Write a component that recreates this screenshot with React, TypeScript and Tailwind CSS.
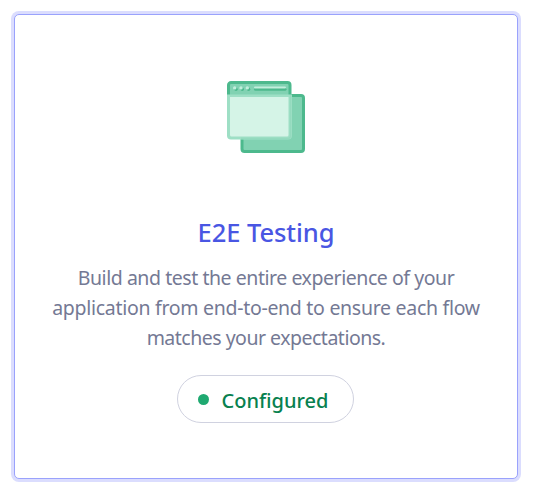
function WindowsIcon() {
  return (
    <svg width="78" height="72" viewBox="0 0 78 72" fill="none" aria-hidden="true">
      <rect x="15" y="14.5" width="61.5" height="56" rx="2.5" fill="#81D2B2" stroke="#4DB98D" strokeWidth="3" />
      <path d="M1.5 14V4A2.5 2.5 0 0 1 4 1.5H60.5A2.5 2.5 0 0 1 63 4V14Z" fill="#81D2B2" />
      <path d="M1.5 14V4A2.5 2.5 0 0 1 4 1.5H60.5A2.5 2.5 0 0 1 63 4V14" stroke="#4DB98D" strokeWidth="3" />
      <path d="M0 13.5H65V54.5A4 4 0 0 1 61 58.5H4A4 4 0 0 1 0 54.5Z" fill="#9EDFC5" />
      <path d="M63.500 14V54.500A2.500 2.500 0 0 1 61 57.500H14" stroke="#94DABE" strokeWidth="1.500" />
      <path d="M3 16H61.500V54A1.500 1.500 0 0 1 60 55.500H4.500A1.500 1.500 0 0 1 3 54Z" fill="#D5F4E7" />
      <g fill="#4DB98D">
        <circle cx="9" cy="8.200" r="1.700" />
        <circle cx="15.300" cy="8.200" r="1.700" />
        <circle cx="21.600" cy="8.200" r="1.700" />
      </g>
      <path d="M28.500 8.300H58" stroke="#4DB98D" strokeWidth="3" strokeLinecap="round" />
      <g fill="#C2EEDC">
        <circle cx="7.700" cy="6.900" r="1.700" />
        <circle cx="14" cy="6.900" r="1.700" />
        <circle cx="20.300" cy="6.900" r="1.700" />
      </g>
      <path d="M28 6.500H58" stroke="#C2EEDC" strokeWidth="2" strokeLinecap="round" />
    </svg>
  );
}

export default function App() {
  return (
    <main className="h-[491px] w-[535px] bg-white pt-[14px] pl-[14px] font-['Segoe_UI','Noto_Sans',sans-serif]">
      <button
        type="button"
        className="flex h-[465px] w-[504px] flex-col items-center rounded-[5px] border border-[#9aa2fc] bg-white pt-[66px] ring-3 ring-[#dbddfe]"
      >
        <WindowsIcon />
        <h2 className="mt-[63px] text-[25.500px] leading-8 font-medium tracking-[-0.080px] whitespace-nowrap text-[#4956e3]">
          E2E Testing
        </h2>
        <p className="mt-[15px] flex flex-col text-[19.500px] leading-[30px] whitespace-nowrap text-[#747994]">
          <span className="tracking-[-0.450px]">Build and test the entire experience of your</span>
          <span className="tracking-[-0.290px]">application from end-to-end to ensure each flow</span>
          <span className="tracking-[-0.500px]">matches your expectations.</span>
        </p>
        <span className="mt-[22px] mr-[2px] flex h-12 w-[177px] items-center rounded-full border border-[#d0d2e0] pl-5">
          <span className="size-[11px] shrink-0 rounded-full bg-[#1fa971]" />
          <span className="ml-[13px] pt-[3px] text-[20px] leading-7 font-medium whitespace-nowrap text-[#08814f]">
            Configured
          </span>
        </span>
      </button>
    </main>
  );
}
